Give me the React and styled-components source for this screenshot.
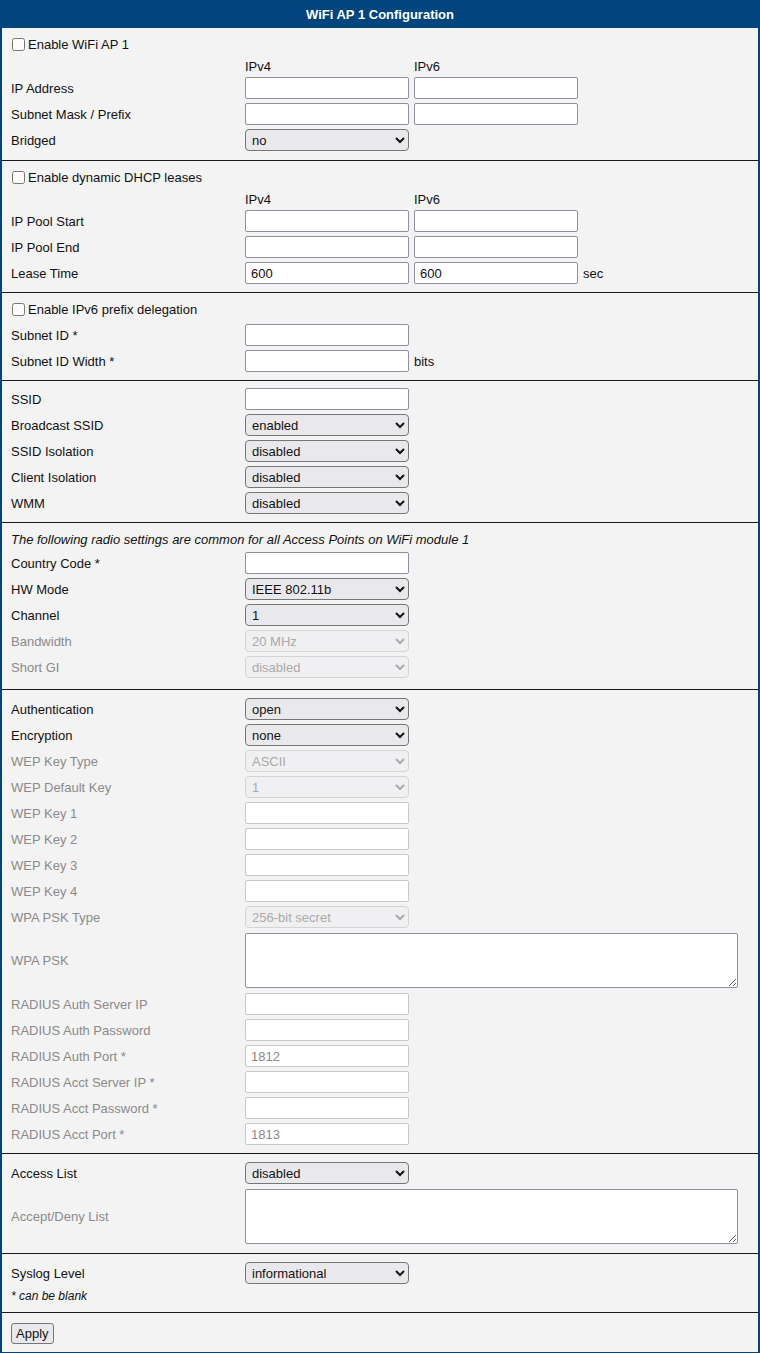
import React from 'react'
import styled, { createGlobalStyle } from 'styled-components'

const Global = createGlobalStyle`
  body { margin: 0; background: #fff; font-family: "Liberation Sans", Arial, sans-serif; font-size: 13px; color: #111; }
`

const Panel = styled.div`
  width: 756px;
  border: 2px solid #00457e;
  background: #f3f3f3;
`

const Header = styled.div`
  background: #00457e;
  color: #fff;
  font-weight: 700;
  text-align: center;
  height: 26px;
  line-height: 26px;
`

const Section = styled.div`
  padding: ${p => p.$pad || '3px 0 6px'};
  border-top: ${p => (p.$first ? 'none' : '1px solid #1a1a1a')};
  display: grid;
  grid-template-columns: 229px 164px 164px auto;
  column-gap: 5px;
  padding-left: 9px;
`

const Label = styled.div`
  height: ${p => p.$h || 26}px;
  display: flex;
  align-items: center;
  color: ${p => (p.$off ? '#8a8a8a' : '#111')};
  grid-column: 1;
`

const Cell = styled.div`
  height: ${p => p.$h || 26}px;
  display: flex;
  align-items: center;
  grid-column: ${p => p.$span || 'auto'};
`

const Full = styled.div`
  grid-column: 1 / -1;
  height: ${p => p.$h || 26}px;
  display: flex;
  align-items: center;
  font-style: ${p => (p.$italic ? 'italic' : 'normal')};
  font-size: ${p => (p.$small ? '12px' : '13px')};
`

const Head = styled.div`
  height: 18px;
  display: flex;
  align-items: center;
`

const Box = styled.input`
  margin: 0 3px 0 1px;
  width: 13px;
  height: 13px;
`

const Input = styled.input`
  box-sizing: border-box;
  width: 164px;
  height: 22px;
  border: 1px solid ${p => (p.disabled ? '#c8c8c8' : '#8f8f9d')};
  border-radius: 2px;
  background: #fff;
  font: 13px "Liberation Sans", Arial, sans-serif;
  color: ${p => (p.disabled ? '#8a8a8a' : '#111')};
  padding: 0 5px;
`

const Select = styled.select`
  box-sizing: border-box;
  width: 164px;
  height: 22px;
  border: 1px solid ${p => (p.disabled ? '#c8c8c8' : '#767676')};
  border-radius: 4px;
  background: ${p => (p.disabled ? '#f0f0f2' : '#e9e9ed')};
  font: 13px "Liberation Sans", Arial, sans-serif;
  color: ${p => (p.disabled ? '#8a8a8a' : '#111')};
  padding: 0 2px;
`

const Area = styled.textarea`
  box-sizing: border-box;
  width: 493px;
  height: 55px;
  border: 1px solid ${p => (p.disabled ? '#c8c8c8' : '#8f8f9d')};
  border-radius: 2px;
  background: #fff;
`

const Button = styled.button`
  font: 13px "Liberation Sans", Arial, sans-serif;
  padding: 2px 4px;
  border: 1px solid #767676;
  border-radius: 3px;
  background: #e9e9ed;
  color: #111;
`

const Check = ({ children }) => (
  <Full>
    <Box type="checkbox" />
    {children}
  </Full>
)

const Row = ({ label, off, children, h }) => (
  <>
    <Label $off={off} $h={h}>{label}</Label>
    {children}
  </>
)

const In = ({ v, off }) => (
  <Cell>
    <Input defaultValue={v} disabled={off} />
  </Cell>
)

const Sel = ({ v, off }) => (
  <Cell $span="2 / span 1">
    <Select disabled={off} defaultValue={v}>
      <option>{v}</option>
    </Select>
  </Cell>
)

const Skip = () => <Cell $span="3 / -1" />

const Heads = () => (
  <>
    <Head />
    <Head>IPv4</Head>
    <Head>IPv6</Head>
    <Head />
  </>
)

export default function App() {
  return (
    <>
      <Global />
      <Panel>
        <Header>WiFi AP 1 Configuration</Header>
        <Section $first $pad="3px 0 7px">
          <Check>Enable WiFi AP 1</Check>
          <Heads />
          <Row label="IP Address"><In /><In /><Cell /></Row>
          <Row label="Subnet Mask / Prefix"><In /><In /><Cell /></Row>
          <Row label="Bridged"><Sel v="no" /><Skip /></Row>
        </Section>
        <Section>
          <Check>Enable dynamic DHCP leases</Check>
          <Heads />
          <Row label="IP Pool Start"><In /><In /><Cell /></Row>
          <Row label="IP Pool End"><In /><In /><Cell /></Row>
          <Row label="Lease Time"><In v="600" /><In v="600" /><Cell>sec</Cell></Row>
        </Section>
        <Section>
          <Check>Enable IPv6 prefix delegation</Check>
          <Row label="Subnet ID *"><In /><Skip /></Row>
          <Row label="Subnet ID Width *"><In /><Cell $span="3 / -1">bits</Cell></Row>
        </Section>
        <Section $pad="5px 0 6px">
          <Row label="SSID"><In /><Skip /></Row>
          <Row label="Broadcast SSID"><Sel v="enabled" /><Skip /></Row>
          <Row label="SSID Isolation"><Sel v="disabled" /><Skip /></Row>
          <Row label="Client Isolation"><Sel v="disabled" /><Skip /></Row>
          <Row label="WMM"><Sel v="disabled" /><Skip /></Row>
        </Section>
        <Section $pad="5px 0 9px">
          <Full $italic $h={22}>The following radio settings are common for all Access Points on WiFi module 1</Full>
          <Row label="Country Code *"><In /><Skip /></Row>
          <Row label="HW Mode"><Sel v="IEEE 802.11b" /><Skip /></Row>
          <Row label="Channel"><Sel v="1" /><Skip /></Row>
          <Row label="Bandwidth" off><Sel v="20 MHz" off /><Skip /></Row>
          <Row label="Short GI" off><Sel v="disabled" off /><Skip /></Row>
        </Section>
        <Section $pad="6px 0 6px">
          <Row label="Authentication"><Sel v="open" /><Skip /></Row>
          <Row label="Encryption"><Sel v="none" /><Skip /></Row>
          <Row label="WEP Key Type" off><Sel v="ASCII" off /><Skip /></Row>
          <Row label="WEP Default Key" off><Sel v="1" off /><Skip /></Row>
          <Row label="WEP Key 1" off><In off /><Skip /></Row>
          <Row label="WEP Key 2" off><In off /><Skip /></Row>
          <Row label="WEP Key 3" off><In off /><Skip /></Row>
          <Row label="WEP Key 4" off><In off /><Skip /></Row>
          <Row label="WPA PSK Type" off><Sel v="256-bit secret" off /><Skip /></Row>
          <Row label="WPA PSK" off h={61}><Cell $h={61} $span="2 / -1"><Area /></Cell></Row>
          <Row label="RADIUS Auth Server IP" off><In off /><Skip /></Row>
          <Row label="RADIUS Auth Password" off><In off /><Skip /></Row>
          <Row label="RADIUS Auth Port *" off><In v="1812" off /><Skip /></Row>
          <Row label="RADIUS Acct Server IP *" off><In off /><Skip /></Row>
          <Row label="RADIUS Acct Password *" off><In off /><Skip /></Row>
          <Row label="RADIUS Acct Port *" off><In v="1813" off /><Skip /></Row>
        </Section>
        <Section $pad="6px 0 6px">
          <Row label="Access List"><Sel v="disabled" /><Skip /></Row>
          <Row label="Accept/Deny List" off h={61}><Cell $h={61} $span="2 / -1"><Area /></Cell></Row>
        </Section>
        <Section $pad="6px 0 6px">
          <Row label="Syslog Level"><Sel v="informational" /><Skip /></Row>
          <Full $italic $small $h={20}>* can be blank</Full>
        </Section>
        <Section $pad="8px 0 7px">
          <Full $h={24}><Button>Apply</Button></Full>
        </Section>
      </Panel>
    </>
  )
}
